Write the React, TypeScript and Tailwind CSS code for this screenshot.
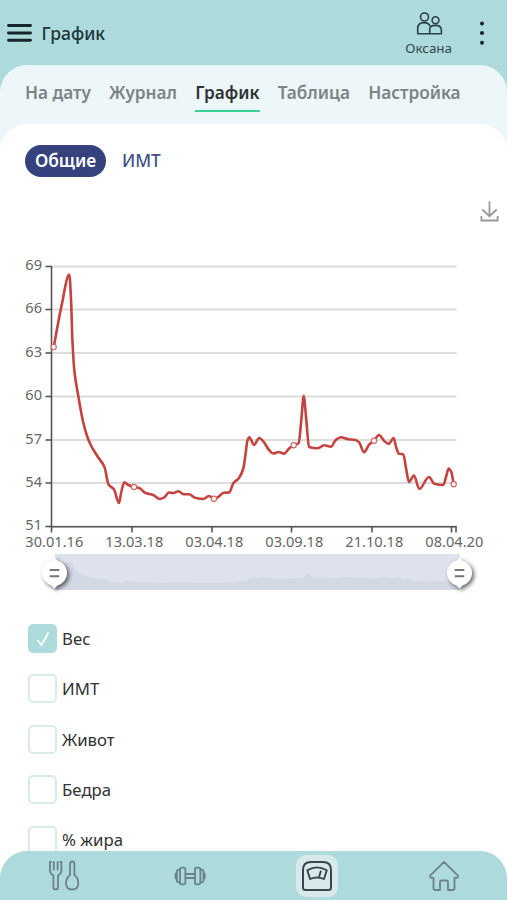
import type { ReactNode } from 'react';

const tabs = ['На дату', 'Журнал', 'График', 'Таблица', 'Настройка'];

const options = [
    { label: 'Вес', checked: true },
    { label: 'ИМТ', checked: false },
    { label: 'Живот', checked: false },
    { label: 'Бедра', checked: false },
    { label: '% жира', checked: false },
];

const yTicks = [
    { label: '69', y: 266.5 },
    { label: '66', y: 309.5 },
    { label: '63', y: 353 },
    { label: '60', y: 396.5 },
    { label: '57', y: 440 },
    { label: '54', y: 483 },
    { label: '51', y: 526.5 },
];

const xTicks = [
    { label: '30.01.16', x: 51.5, labelX: 54.3 },
    { label: '13.03.18', x: 132, labelX: 134.3 },
    { label: '03.04.18', x: 212, labelX: 214.3 },
    { label: '03.09.18', x: 291.5, labelX: 294.3 },
    { label: '21.10.18', x: 372, labelX: 374.3 },
    { label: '08.04.20', x: 451.5, labelX: 454.3 },
];

const points: [number, number][] = [
    [53.7, 347], [61.5, 306], [69.3, 274.5], [71.3, 306], [72.3, 338], [74.5, 372], [78.3, 396],
    [82.7, 420], [86.7, 435], [90.7, 445], [97.3, 456], [104.5, 467], [108.5, 484.5], [114, 489.5],
    [119, 503], [121.3, 492], [124.3, 482.3], [128.3, 485], [134, 487], [139.3, 488], [145, 492.7],
    [153.3, 495], [159.8, 499], [163.8, 497.7], [169, 492.5], [173.3, 493], [178.3, 491.3],
    [183.7, 494.3], [189, 494.2], [195, 497.7], [203.3, 499], [209, 496], [214, 498.7], [218.3, 497],
    [223.7, 492.7], [229.3, 492.5], [233.3, 483.3], [239, 478], [243.3, 468.5], [245.7, 453],
    [247.3, 441], [249.3, 437.3], [254, 444.9], [259.3, 438], [264.3, 442.7], [269, 450],
    [273.3, 453.5], [279, 452], [284, 453.6], [289.3, 448.3], [293.7, 445.3], [298.7, 443],
    [301.3, 420], [303.7, 396], [306.3, 420], [309, 447], [317.3, 448.3], [324.3, 445.3],
    [331, 446.8], [335.7, 440], [341, 437.3], [348.3, 439.2], [355, 439.8], [359.3, 442.7],
    [364, 452.3], [369.3, 444.3], [374, 440.7], [379, 435], [384, 440.7], [388.7, 443.9],
    [393.7, 438], [396, 446.7], [399, 453.8], [403.3, 454.2], [406, 468], [409, 481.9], [414, 475.5],
    [419.3, 489], [429, 477], [434.3, 483.7], [443.3, 485], [446, 477], [448.7, 468.5],
    [451.3, 472], [453.7, 484.3],
];

const markers = [
    [53.7, 347],
    [134, 487],
    [214, 498.7],
    [293.7, 445.3],
    [374, 440.7],
    [453.7, 484.3],
];

// Monotone cubic so that the peaks are not overshot
function smoothPath(pts: [number, number][]) {
    const slopes = pts.slice(1).map((p, i) => (p[1] - pts[i][1]) / (p[0] - pts[i][0]));
    const tangents = pts.map((_, i) => {
        if (i === 0) return slopes[0];
        if (i === pts.length - 1) return slopes[i - 1];
        const a = slopes[i - 1];
        const b = slopes[i];
        return a * b <= 0 ? 0 : (2 * a * b) / (a + b);
    });
    let d = `M${pts[0][0]} ${pts[0][1]}`;
    for (let i = 1; i < pts.length; i++) {
        const [x0, y0] = pts[i - 1];
        const [x1, y1] = pts[i];
        const h = (x1 - x0) / 3;
        d += `C${x0 + h} ${y0 + tangents[i - 1] * h} ${x1 - h} ${y1 - tangents[i] * h} ${x1} ${y1}`;
    }
    return d;
}

const previewPoints = points.map(([x, y]): [number, number] => [
    55 + (x - 53.7) * 1.0125,
    583 + (y - 499) * 0.093,
]);

function Handle({ x }: { x: number }) {
    return (
        <g transform={`translate(${x} 573)`}>
            <path
                d="M0 -15.5 L3 -12.4 A12.8 12.8 0 0 1 3 12.4 L0 15.5 L-3 12.4 A12.8 12.8 0 0 1 -3 -12.4Z"
                fill="#fff"
                className="drop-shadow-[2px_2px_2px_rgba(0,0,0,0.6)]"
            />
            <path d="M-4.8 -3H4.8M-4.8 3.2H4.8" stroke="#777" strokeWidth="2" />
        </g>
    );
}

function Chart() {
    return (
        <svg className="block h-[370px] w-full" viewBox="0 240 507 370" fontSize="14.6" fill="#666">
            {yTicks.map((tick) => (
                <g key={tick.label}>
                    <path d={`M52 ${tick.y}H456.5`} stroke="#dcdcdc" strokeWidth="1.8" />
                    <path d={`M45.5 ${tick.y}H52`} stroke="#555" strokeWidth="1.6" />
                    <text x="42" y={tick.y + 3.5} textAnchor="end">
                        {tick.label}
                    </text>
                </g>
            ))}
            {xTicks.map((tick) => (
                <g key={tick.label}>
                    <path d={`M${tick.x} 527v5.5`} stroke="#555" strokeWidth="1.6" />
                    <text x={tick.labelX} y="547" textAnchor="middle">
                        {tick.label}
                    </text>
                </g>
            ))}
            <path d="M51.5 266V526.7H456V532.5" fill="none" stroke="#555" strokeWidth="1.6" />
            <path d={smoothPath(points)} fill="none" stroke="#c4433f" strokeWidth="2.6" strokeLinejoin="round" />
            {markers.map(([x, y]) => (
                <circle key={x} cx={x} cy={y} r="2.6" fill="#fff" stroke="#d3696a" strokeWidth="1.2" />
            ))}

            {/* Range slider */}
            <rect x="55" y="554" width="405" height="36" fill="#dee2ec" />
            <path d={`${smoothPath(previewPoints)}V590H55Z`} fill="#d2d8e4" />
            <Handle x={54.5} />
            <Handle x={459.5} />
        </svg>
    );
}

function NavIcon({ children, className = '' }: { children: ReactNode; className?: string }) {
    return (
        <svg
            className={`h-8 w-8 ${className}`}
            viewBox="0 0 32 32"
            fill="none"
            stroke="currentColor"
            strokeWidth="1.8"
            strokeLinecap="round"
            strokeLinejoin="round"
        >
            {children}
        </svg>
    );
}

export default function App() {
    return (
        <div className="flex h-[900px] w-full flex-col overflow-hidden bg-[#addadb] font-['Noto_Sans','Open_Sans',sans-serif] text-[#333]">
            <header className="flex h-[65px] shrink-0 items-center pt-px pr-[23px] pl-[7px]">
                <svg className="h-5 w-[25px]" viewBox="0 0 25 20" stroke="#17252b" strokeWidth="2.9" strokeLinecap="round">
                    <path d="M1.5 2.5H23.5M1.5 10H23.5M1.5 17.3H23.5" />
                </svg>
                <h1 className="ml-[9.5px] text-[17.5px] font-medium text-[#22343a]">График</h1>
                <div className="ml-auto flex flex-col items-center pt-[3px]">
                    <svg className="h-6 w-7" viewBox="0 0 28 24" fill="none" stroke="#2b4147" strokeWidth="1.6" strokeLinejoin="round">
                        <circle cx="9.5" cy="5" r="4" />
                        <circle cx="20.5" cy="8.2" r="3.4" />
                        <path d="M14.7 21.8H2.7V16.6C2.7 12.6 5.3 10.6 9 10.6C12 10.6 14 11.8 15.2 14" />
                        <path d="M14.7 21.8V17.5C14.7 15 17 13.4 20.3 13.4C23.8 13.4 26.4 15.2 26.4 18.2V21.8Z" />
                    </svg>
                    <span className="mt-0.5 text-[13.4px] leading-[20px] text-[#33494f]">Оксана</span>
                </div>
                <svg className="ml-[28px] h-6 w-1" viewBox="0 0 4 24" fill="#14242a">
                    <circle cx="2" cy="2.4" r="2" />
                    <circle cx="2" cy="12" r="2" />
                    <circle cx="2" cy="21.7" r="2" />
                </svg>
            </header>

            <div className="flex min-h-0 flex-1 flex-col rounded-t-[27px] bg-[#edf6f9]">
                <nav className="flex h-[59px] shrink-0 items-start gap-[18.2px] pt-[13px] pl-[25px] text-[17.2px] font-semibold text-[#7d8485]">
                    {tabs.map((tab) => (
                        <span
                            key={tab}
                            className={
                                tab === 'График'
                                    ? 'h-[34px] border-b-[2.5px] border-[#35d394] leading-[29px] whitespace-nowrap text-[#2d3335]'
                                    : 'leading-[29px] whitespace-nowrap'
                            }
                        >
                            {tab}
                        </span>
                    ))}
                </nav>

                <main className="min-h-0 flex-1 overflow-hidden rounded-t-[27px] bg-white">
                    <div className="flex h-[72px] items-center pt-px pl-[25px] text-[17.3px] font-semibold">
                        <span className="flex h-8 w-[81px] items-center justify-center rounded-full bg-[#35427d] text-white">
                            Общие
                        </span>
                        <span className="ml-4 font-medium text-[#44508a]">ИМТ</span>
                    </div>

                    <div className="flex h-11 justify-end pt-[5px] pr-2">
                        <svg className="h-[21px] w-[19px]" viewBox="0 0 19 21" fill="none" stroke="#999" strokeWidth="1.8">
                            <path d="M9.5 0.5V15M2.3 8.5L9.5 15.2L16.7 8.5M1.4 15V19.5H17.6V15" />
                        </svg>
                    </div>

                    <Chart />

                    {/* Series list */}
                    <ul className="flex flex-col gap-[21.4px] pt-[14px] pl-[28px]">
                        {options.map((option) => (
                            <li key={option.label} className="flex h-[29px] items-center gap-[5px] text-[16.8px]">
                                <span
                                    className={
                                        option.checked
                                            ? 'flex size-[29px] items-center justify-center rounded-[5px] bg-[#addadb]'
                                            : 'size-[29px] rounded-[5px] border-2 border-[#d7ebe9]'
                                    }
                                >
                                    {option.checked && (
                                        <svg className="size-4" viewBox="0 0 16 16" fill="none" stroke="#fff" strokeWidth="1.8">
                                            <path d="M2.5 9L6.5 14L13.5 1.5" />
                                        </svg>
                                    )}
                                </span>
                                {option.label}
                            </li>
                        ))}
                    </ul>
                </main>
            </div>

            <div className="shrink-0 bg-white">
                <footer className="grid h-[49px] grid-cols-4 items-center justify-items-center rounded-t-[27px] bg-[#addadb] text-[#6c8289]">
                    <NavIcon className="overflow-visible">
                        <path d="M3 1.8V10C3 13 4.2 14.4 6.4 15.5V27.5Q6.4 29.5 8.7 29.5Q11 29.5 11 27.5V15.5C13.2 14.4 14.4 13 14.4 10V1.8" />
                        <path d="M6.8 1.8V9.5M10.6 1.8V9.5M3 1.8H4.2M13.2 1.8H14.4" />
                        <path d="M23 15V4Q23 1.5 25.2 1.5Q27.4 1.5 27.4 4V15C30 17 31.3 19.8 31.3 22.7C31.3 27 29 29.5 25.2 29.5C21.3 29.5 19 27 19 22.7C19 19.8 20.4 17 23 15Z" />
                    </NavIcon>
                    <NavIcon>
                        <path d="M11.4 14H21M11.4 18H21" />
                        <rect x="6" y="7.6" width="5.4" height="16.8" rx="1.8" />
                        <rect x="21" y="7.6" width="5.4" height="16.8" rx="1.8" />
                        <path d="M6 9.7H4.7Q2.9 9.7 2.9 11.5V20.5Q2.9 22.3 4.7 22.3H6M2.9 12.7Q1.5 13 1.5 14.8V17.2Q1.5 19 2.9 19.3" />
                        <path d="M26.4 9.7H27.7Q29.5 9.7 29.5 11.5V20.5Q29.5 22.3 27.7 22.3H26.4M29.5 12.7Q30.8 13 30.8 14.8V17.2Q30.8 19 29.5 19.3" />
                    </NavIcon>
                    <span className="flex size-[42px] items-center justify-center rounded-[10px] bg-[#d8e9ee]">
                        <NavIcon className="text-[#36464d]">
                            <path strokeWidth="2" d="M2 27.5V10C2 4.5 5 2 10 2H22C27 2 30 4.5 30 10V27.5Q30 30 27.5 30H4.5Q2 30 2 27.5Z" />
                            <path strokeWidth="1.9" d="M6.3 10.3Q16 4.5 25.8 10.3L23 19Q16 16 9.1 19ZM18.2 16.5L19.7 11.5" />
                        </NavIcon>
                    </span>
                    <NavIcon>
                        <path d="M16 1.8L2.4 15.3Q1.3 17.5 3.6 17.8H5.5V28Q5.5 30 7.5 30H12V22Q12 20.5 13.5 20.5H18.5Q20 20.5 20 22V30H24.5Q26.5 30 26.5 28V17.8H28.5Q30.8 17.5 29.7 15.3Z" />
                    </NavIcon>
                </footer>
            </div>
        </div>
    );
}
